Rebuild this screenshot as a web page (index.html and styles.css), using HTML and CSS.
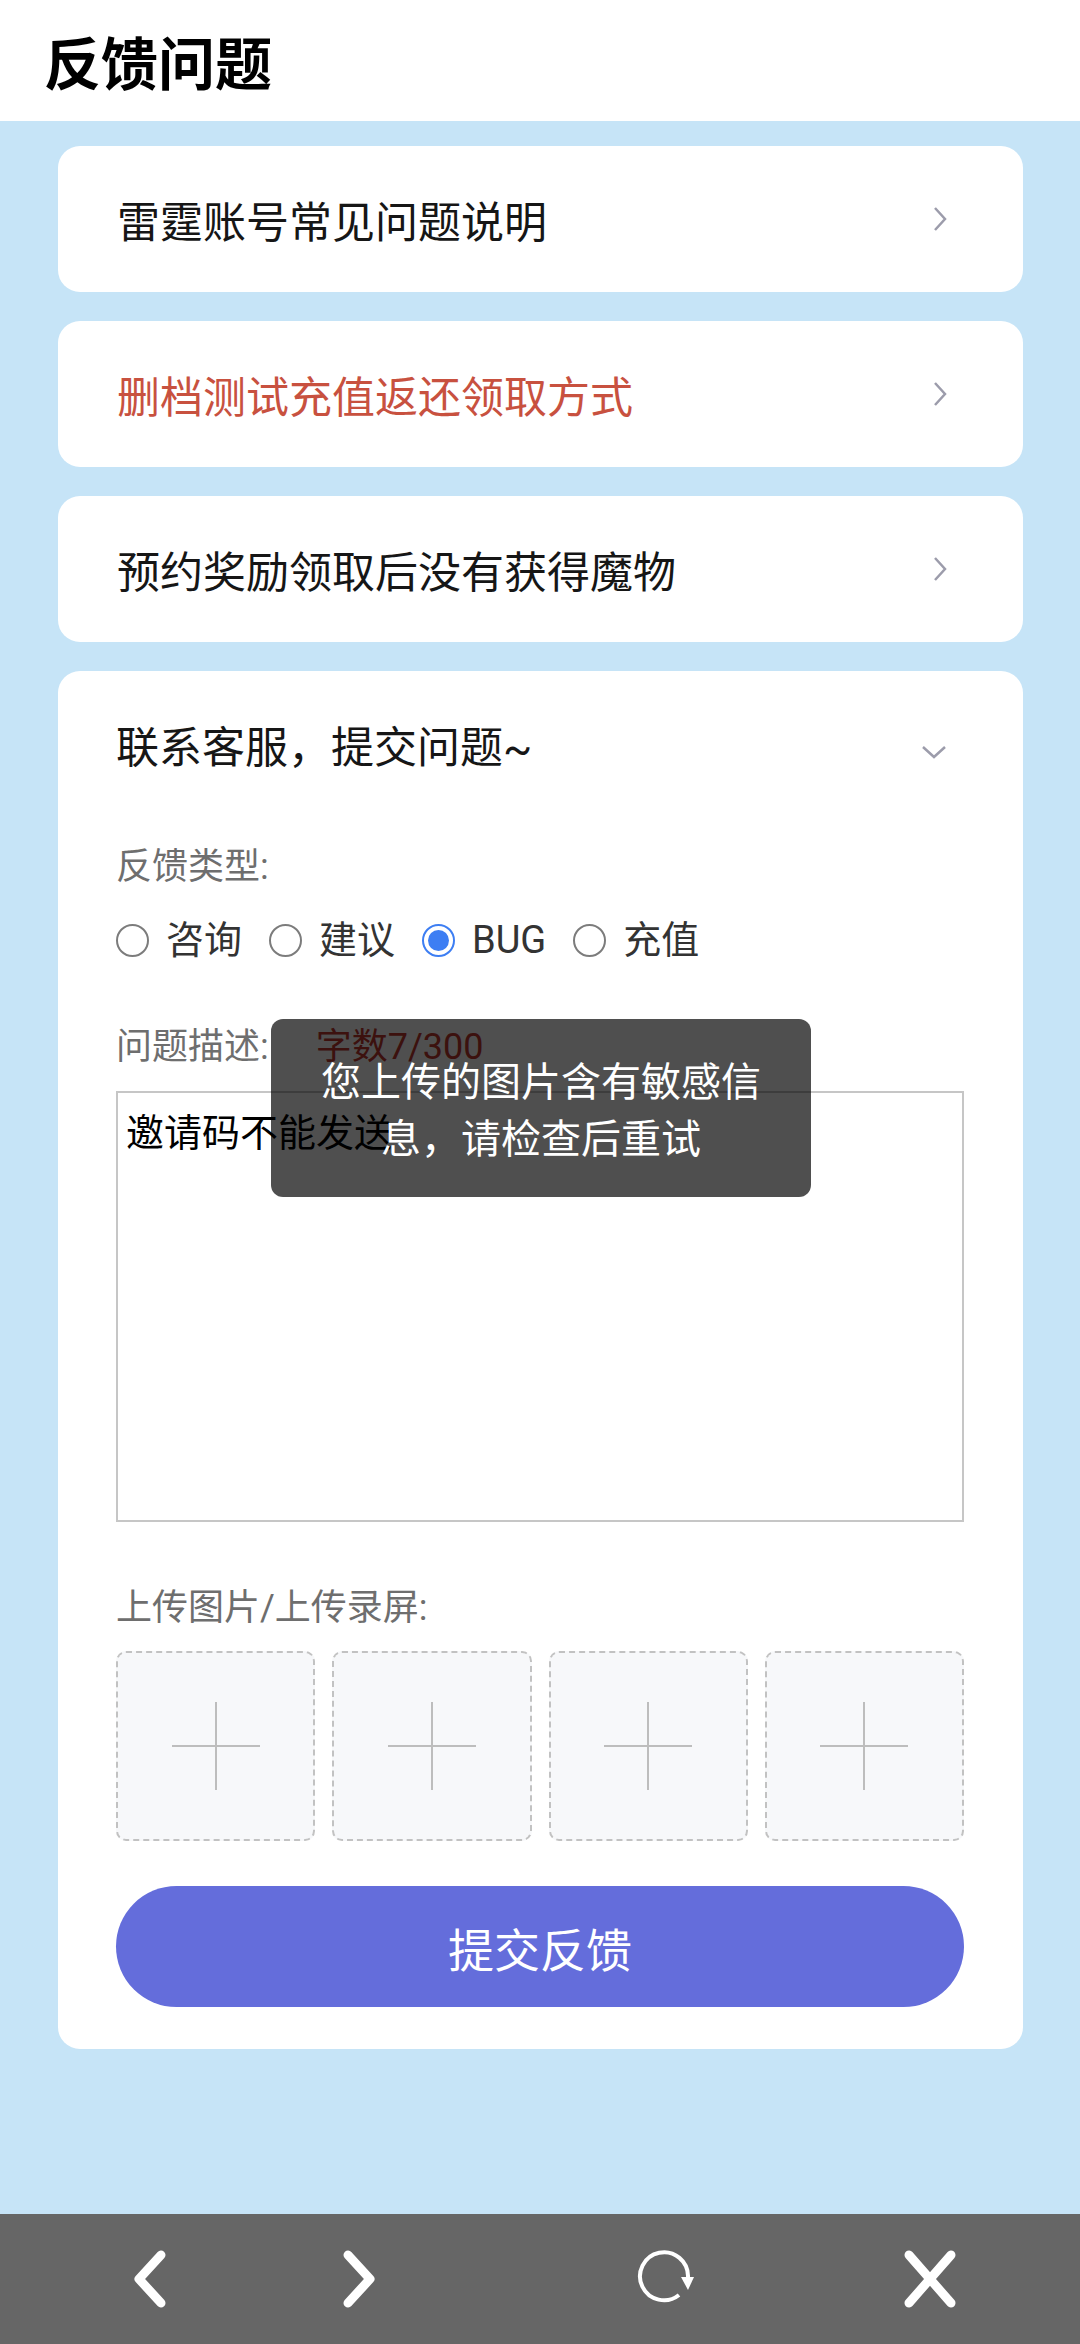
FILE: index.html
```html
<!DOCTYPE html>
<html>
<head>
	<meta charset="utf-8">
	<meta name="viewport" content="width=device-width, initial-scale=1">
	<title>反馈问题</title>
	<link rel="stylesheet" href="styles.css">
</head>
<body>

	<div class="top">
		<h1>反馈问题</h1>
	</div>

	<div class="page">
		<div class="faq">
			<span>雷霆账号常见问题说明</span>
			<svg class="arrow" width="16" height="28" viewBox="0 0 16 28"><polyline points="3,3 13,14 3,25"/></svg>
		</div>
		<div class="faq red">
			<span>删档测试充值返还领取方式</span>
			<svg class="arrow" width="16" height="28" viewBox="0 0 16 28"><polyline points="3,3 13,14 3,25"/></svg>
		</div>
		<div class="faq">
			<span>预约奖励领取后没有获得魔物</span>
			<svg class="arrow" width="16" height="28" viewBox="0 0 16 28"><polyline points="3,3 13,14 3,25"/></svg>
		</div>

		<div class="contact">
			<div class="contact_head">
				<span>联系客服，提交问题~</span>
				<svg class="arrow_down" width="26" height="16" viewBox="0 0 26 16"><polyline points="2,3 13,13 24,3"/></svg>
			</div>

			<div class="label first">反馈类型:</div>
			<div class="types">
				<label class="type"><span class="dot"></span><span>咨询</span></label>
				<label class="type"><span class="dot"></span><span>建议</span></label>
				<label class="type"><span class="dot on"></span><span>BUG</span></label>
				<label class="type"><span class="dot"></span><span>充值</span></label>
			</div>

			<div class="label desc">问题描述:<span class="count">字数7/300</span></div>
			<textarea id="text_column">邀请码不能发送</textarea>

			<div class="label upload_label">上传图片/上传录屏:</div>
			<div class="uploads">
				<div class="box"><svg width="88" height="88" viewBox="0 0 88 88"><line x1="0" y1="44" x2="88" y2="44"/><line x1="44" y1="0" x2="44" y2="88"/></svg></div>
				<div class="box"><svg width="88" height="88" viewBox="0 0 88 88"><line x1="0" y1="44" x2="88" y2="44"/><line x1="44" y1="0" x2="44" y2="88"/></svg></div>
				<div class="box"><svg width="88" height="88" viewBox="0 0 88 88"><line x1="0" y1="44" x2="88" y2="44"/><line x1="44" y1="0" x2="44" y2="88"/></svg></div>
				<div class="box"><svg width="88" height="88" viewBox="0 0 88 88"><line x1="0" y1="44" x2="88" y2="44"/><line x1="44" y1="0" x2="44" y2="88"/></svg></div>
			</div>

			<button class="submit">提交反馈</button>
		</div>
	</div>

	<div class="bar">
		<svg class="nav back" width="60" height="64" viewBox="0 0 60 64"><polyline points="41,8 19,32 41,56"/></svg>
		<svg class="nav fwd" width="60" height="64" viewBox="0 0 60 64"><polyline points="19,8 41,32 19,56"/></svg>
		<svg class="nav reload" width="60" height="64" viewBox="0 0 60 64">
			<path class="thin" d="M43 48 A24 24 0 1 1 52 30"/>
			<polygon class="fill" points="45,30 58,30 52,43"/>
		</svg>
		<svg class="nav close" width="60" height="64" viewBox="0 0 60 64"><line x1="9" y1="8" x2="51" y2="56"/><line x1="51" y1="8" x2="9" y2="56"/></svg>
	</div>

	<div class="toast">您上传的图片含有敏感信息，请检查后重试</div>

</body>
</html>
```

FILE: styles.css
```css
body{
	margin: 0;
	width: 1080px;
	min-height: 2344px;
	display: flex;
	flex-direction: column;
	background: #c6e4f7;
	font-family: Roboto, "Noto Sans CJK SC", sans-serif;
	position: relative;
}
.top{
	height: 121px;
	background: #fff;
	display: flex;
	align-items: center;
	padding-left: 44px;
}
h1{
	margin: 0;
	font-family: "Noto Sans CJK SC", sans-serif;
	font-size: 57px;
	font-weight: 700;
	color: #000;
	line-height: 1;
}
.page{
	flex: 1;
	padding: 25px 57px 0 58px;
	display: flex;
	flex-direction: column;
	gap: 29px;
}
.faq{
	height: 146px;
	background: #fff;
	border-radius: 22px;
	display: flex;
	align-items: center;
	justify-content: space-between;
	padding: 0 75px 0 59px;
	font-size: 43px;
	color: #161616;
}
.red{
	color: #c8513f;
}
.arrow polyline, .arrow_down polyline{
	fill: none;
	stroke: #9c9cab;
	stroke-width: 2.5;
}
.contact{
	background: #fff;
	border-radius: 22px;
	padding: 0 59px 42px 58px;
	display: flex;
	flex-direction: column;
}
.contact_head{
	height: 146px;
	display: flex;
	align-items: center;
	justify-content: space-between;
	padding-right: 17px;
	font-size: 43px;
	color: #161616;
}
.arrow_down{
	margin-top: 16px;
}
.label{
	font-size: 36px;
	line-height: 50px;
	color: #6e6e6e;
}
.first{
	margin-top: 25px;
}
.types{
	margin-top: 23px;
	height: 50px;
	display: flex;
	align-items: center;
}
.type{
	display: flex;
	align-items: center;
	font-size: 38px;
	line-height: 50px;
	color: #333;
	margin-right: 27px;
}
.dot{
	width: 29px;
	height: 29px;
	border: 2.5px solid #7c7c7c;
	border-radius: 50%;
	margin-right: 17px;
	box-sizing: content-box;
	position: relative;
}
.dot.on{
	border-color: #3d7ef3;
}
.dot.on:after{
	content: "";
	position: absolute;
	left: 4px;
	top: 4px;
	width: 21px;
	height: 21px;
	border-radius: 50%;
	background: #3d7ef3;
}
.desc{
	margin-top: 57px;
}
.count{
	color: #c0392f;
	margin-left: 47px;
}
#text_column{
	margin-top: 19px;
	height: 431px;
	width: 100%;
	box-sizing: border-box;
	border: 2px solid #c6c6c6;
	border-radius: 0;
	padding: 12px 8px;
	font-family: "Noto Sans CJK SC", sans-serif;
	font-size: 38px;
	line-height: 50px;
	color: #000;
	resize: none;
	outline: none;
}
.upload_label{
	margin-top: 61px;
}
.uploads{
	margin-top: 18px;
	display: grid;
	grid-template-columns: repeat(4, 1fr);
	gap: 17px;
}
.box{
	height: 190px;
	box-sizing: border-box;
	border: 2px dashed #c2c2c2;
	border-radius: 10px;
	background: #f7f8fa;
	display: flex;
	align-items: center;
	justify-content: center;
}
.box line{
	stroke: #bdbdbd;
	stroke-width: 2;
}
.submit{
	margin-top: 45px;
	height: 121px;
	border: none;
	border-radius: 61px;
	background: #646ddb;
	color: #fff;
	font-family: "Noto Sans CJK SC", sans-serif;
	font-size: 46px;
}
.bar{
	height: 130px;
	background: #666;
	display: flex;
	align-items: center;
	padding-left: 120px;
}
.nav polyline, .nav line{
	fill: none;
	stroke: #fff;
	stroke-width: 9;
	stroke-linecap: round;
	stroke-linejoin: round;
}
.nav .thin{
	fill: none;
	stroke: #fff;
	stroke-width: 4;
}
.nav .fill{
	fill: #fff;
}
.fwd{
	margin-left: 149px;
}
.reload{
	margin-left: 247px;
}
.close{
	margin-left: 204px;
}
.toast{
	position: absolute;
	left: 271px;
	top: 1019px;
	width: 540px;
	box-sizing: border-box;
	padding: 32px 48px;
	border-radius: 12px;
	background: rgba(0, 0, 0, 0.69);
	color: #fff;
	font-family: "Noto Sans CJK SC", sans-serif;
	font-size: 40px;
	line-height: 57px;
	text-align: center;
}
```
